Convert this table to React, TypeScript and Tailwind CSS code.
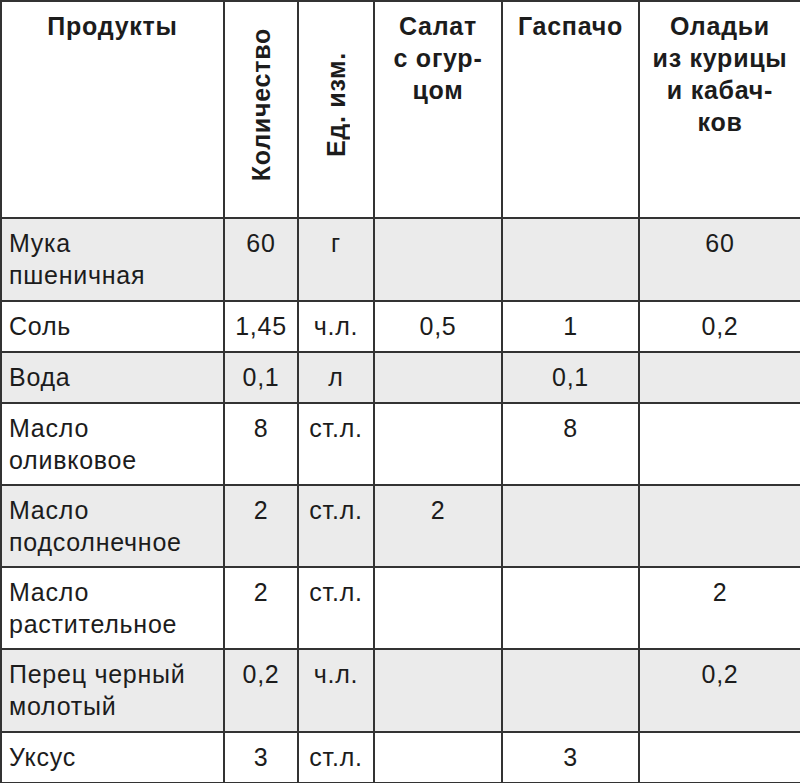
import React from "react";

type Row = {
  name: string[];
  qty: string;
  unit: string;
  salad: string;
  gazpacho: string;
  fritters: string;
  h: string;
  gray: boolean;
};

const rows: Row[] = [
  { name: ["Мука", "пшеничная"], qty: "60", unit: "г", salad: "", gazpacho: "", fritters: "60", h: "h-[83px]", gray: true },
  { name: ["Соль"], qty: "1,45", unit: "ч.л.", salad: "0,5", gazpacho: "1", fritters: "0,2", h: "h-[51px]", gray: false },
  { name: ["Вода"], qty: "0,1", unit: "л", salad: "", gazpacho: "0,1", fritters: "", h: "h-[51px]", gray: true },
  { name: ["Масло", "оливковое"], qty: "8", unit: "ст.л.", salad: "", gazpacho: "8", fritters: "", h: "h-[82px]", gray: false },
  { name: ["Масло", "подсолнечное"], qty: "2", unit: "ст.л.", salad: "2", gazpacho: "", fritters: "", h: "h-[82px]", gray: true },
  { name: ["Масло", "растительное"], qty: "2", unit: "ст.л.", salad: "", gazpacho: "", fritters: "2", h: "h-[82px]", gray: false },
  { name: ["Перец черный", "молотый"], qty: "0,2", unit: "ч.л.", salad: "", gazpacho: "", fritters: "0,2", h: "h-[83px]", gray: true },
  { name: ["Уксус"], qty: "3", unit: "ст.л.", salad: "", gazpacho: "3", fritters: "", h: "h-[51px]", gray: false },
];

const cell = "border-2 border-[#333] align-top pt-[8px] leading-[32px]";

const App = () => {
  return (
    <div className="w-[800px] bg-white text-[#1c1c1c] font-['Liberation_Sans',Arial,sans-serif] text-[25px] tracking-[0.03em]">
      <table className="w-[800px] table-fixed border-collapse">
        <colgroup>
          <col className="w-[223px]" />
          <col className="w-[74px]" />
          <col className="w-[76px]" />
          <col className="w-[128px]" />
          <col className="w-[137px]" />
          <col className="w-[162px]" />
        </colgroup>
        <thead>
          <tr className="h-[217px] font-bold">
            <th className={`${cell} text-center leading-[31px]`}>Продукты</th>
            <th className="border-2 border-[#333] align-middle text-center">
              <span className="inline-block [writing-mode:vertical-rl] rotate-180 leading-[25px]">Количество</span>
            </th>
            <th className="border-2 border-[#333] align-middle text-center">
              <span className="inline-block [writing-mode:vertical-rl] rotate-180 leading-[25px]">Ед. изм.</span>
            </th>
            <th className={`${cell} text-center leading-[31px]`}>
              Салат
              <br />с огур-
              <br />
              цом
            </th>
            <th className={`${cell} text-center leading-[31px]`}>Гаспачо</th>
            <th className={`${cell} text-center leading-[31px]`}>
              Оладьи
              <br />
              из курицы
              <br />и кабач-
              <br />
              ков
            </th>
          </tr>
        </thead>
        <tbody>
          {rows.map((r, i) => (
            <tr key={i} className={`${r.h} ${r.gray ? "bg-[#ebebeb]" : "bg-white"}`}>
              <td className={`${cell} pl-[7px] text-left`}>
                {r.name.map((line, j) => (
                  <div key={j}>{line}</div>
                ))}
              </td>
              <td className={`${cell} text-center`}>{r.qty}</td>
              <td className={`${cell} text-center`}>{r.unit}</td>
              <td className={`${cell} text-center`}>{r.salad}</td>
              <td className={`${cell} text-center`}>{r.gazpacho}</td>
              <td className={`${cell} text-center`}>{r.fritters}</td>
            </tr>
          ))}
        </tbody>
      </table>
    </div>
  );
};

export default App;
